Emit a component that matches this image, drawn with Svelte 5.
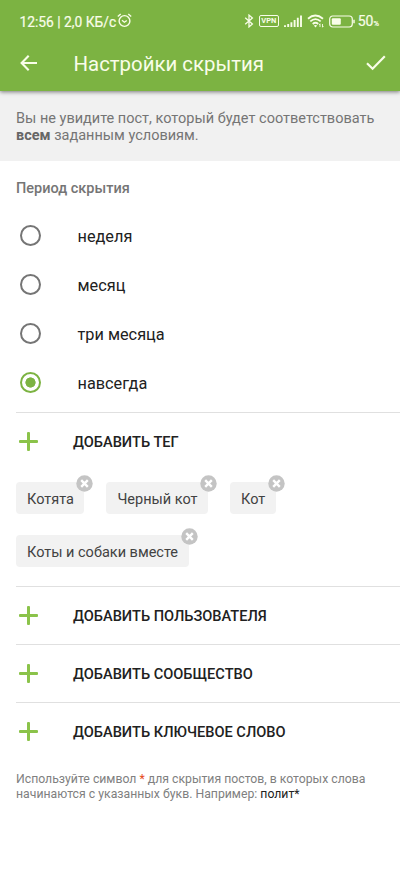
<script lang="ts">
	const periods = [
		{ value: 'week', label: 'неделя' },
		{ value: 'month', label: 'месяц' },
		{ value: 'three_months', label: 'три месяца' },
		{ value: 'forever', label: 'навсегда' }
	];

	const sections = ['Добавить пользователя', 'Добавить сообщество', 'Добавить ключевое слово'];

	let period = 'forever';
	let tags = ['Котята', 'Черный кот', 'Кот', 'Коты и собаки вместе'];

	function removeTag(tag: string) {
		tags = tags.filter((t) => t !== tag);
	}
</script>

<svelte:head>
	<title>Настройки скрытия</title>
</svelte:head>

<div class="screen">
	<header>
		<div class="status">
			<span class="time">12:56 | 2,0 КБ/с</span>
			<svg class="alarm" width="15" height="15" viewBox="0 0 15 15">
				<circle cx="7.5" cy="8" r="5.4" />
				<path d="M.8 3.5 3.7 1M14.2 3.5 11.3 1M5 7.3l2.4 1.9 2.4-1.7" />
			</svg>
			<div class="indicators">
				<svg width="10" height="14" viewBox="0 0 10 14">
					<path d="M1.2 3.8 8.4 10 5 12.9V1.1L8.4 4 1.2 10.2" stroke-width="1.3" />
				</svg>
				<span class="vpn">VPN</span>
				<svg class="signal" width="18" height="12" viewBox="0 0 18 12">
					<path d="M1 10.2V12M4.2 9v3M7.4 7.2V12M10.6 5v7M13.8 2.8V12M17 .5V12" stroke-width="1.9" />
				</svg>
				<svg class="wifi" width="18" height="14" viewBox="0 0 18 14">
					<path d="M1 4.7Q8.2-1.6 16 4.7M3.3 7.4Q8.4 2.9 13.7 7.4M5.7 10Q8.5 7.6 11.2 10" stroke-width="1.8" />
					<path d="m6.8 11.5 1.7 1.9 1.7-1.9Q8.5 10.4 6.8 11.5z" class="solid" />
					<path d="M13 13v-3.2M15.5 10v3.2M12 11l1-1.2M16.4 12l-.9 1.2" stroke-width=".9" />
				</svg>
				<svg class="battery" width="26" height="13" viewBox="0 0 26 13">
					<rect x=".7" y="1" width="22.6" height="11" rx="3" stroke-width="1.2" />
					<rect x="2.8" y="3.2" width="9" height="6.6" rx="1" class="solid" />
					<path d="M25 4.8v3.5" stroke-width="1.5" />
				</svg>
				<span class="percent">50<small>%</small></span>
			</div>
		</div>
		<div class="toolbar">
			<button type="button" aria-label="Назад">
				<svg width="18" height="16" viewBox="0 0 18 16">
					<path d="M8.7.8 1.6 8l7.1 7.2M1.8 8H17" stroke-width="2.1" />
				</svg>
			</button>
			<h1>Настройки скрытия</h1>
			<button type="button" aria-label="Готово">
				<svg width="20" height="16" viewBox="0 0 20 16">
					<path d="m1 8.3 5.6 5.5L18.8 1.3" stroke-width="2.2" />
				</svg>
			</button>
		</div>
	</header>

	<p class="notice">
		Вы не увидите пост, который будет соответствовать<br /><b>всем</b> заданным условиям.
	</p>

	<main>
		<h2>Период скрытия</h2>
		{#each periods as item (item.value)}
			<label class="period">
				<input type="radio" bind:group={period} value={item.value} />
				<span>{item.label}</span>
			</label>
		{/each}

		<section class="tags-section">
			<button type="button" class="add">
				<span class="plus"></span>
				<span>Добавить тег</span>
			</button>
			<div class="tags">
				{#each tags as tag (tag)}
					<div class="tag">
						{tag}
						<button type="button" aria-label="Удалить" on:click={() => removeTag(tag)}>
							<svg width="17" height="17" viewBox="0 0 17 17">
								<circle cx="8.5" cy="8.5" r="8.2" />
								<path d="m5.2 5.2 6.6 6.6M11.8 5.2l-6.6 6.6" />
							</svg>
						</button>
					</div>
				{/each}
			</div>
		</section>

		{#each sections as section (section)}
			<section>
				<button type="button" class="add">
					<span class="plus"></span>
					<span>{section}</span>
				</button>
			</section>
		{/each}

		<p class="hint">
			Используйте символ <i>*</i> для скрытия постов, в которых слова<br />начинаются с указанных букв.
			Например: <b>полит*</b>
		</p>
	</main>
</div>

<style>
	:global(body) {
		background: #fff;
	}
	* {
		box-sizing: border-box;
		margin: 0;
		padding: 0;
	}
	.screen {
		min-height: 889px;
		overflow: hidden;
		font-family: Roboto, sans-serif;
		color: #212121;
	}
	button {
		display: flex;
		border: 0;
		background: none;
		font: inherit;
		color: inherit;
	}

	header {
		position: relative;
		height: 91px;
		background: #7cb342;
		color: #f9fde9;
		box-shadow: 0 1px 4px rgba(0, 0, 0, 0.5);
	}
	header svg {
		flex: none;
		fill: none;
		stroke: currentColor;
	}
	header .solid {
		fill: currentColor;
		stroke: none;
	}
	.status {
		display: flex;
		align-items: center;
		height: 36px;
		padding: 6px 21px 0 19.5px;
		font-size: 14px;
		line-height: 18px;
	}
	.time,
	.percent {
		padding-top: 2px;
		-webkit-text-stroke: 0.2px currentColor;
	}
	.time {
		font-size: 13.8px;
	}
	.alarm {
		margin: -2px 0 0 1px;
		stroke-width: 1.4;
	}
	.indicators {
		display: flex;
		align-items: center;
		margin-left: auto;
	}
	.vpn {
		width: 20px;
		height: 12px;
		margin: 0 5px;
		border: 1.3px solid currentColor;
		border-radius: 2px;
		font-size: 7.5px;
		font-weight: 700;
		line-height: 10px;
		text-align: center;
	}
	.wifi {
		margin: 0 4px 0 5px;
	}
	.percent {
		margin-left: 3px;
	}
	.percent small {
		font-size: 7.5px;
	}
	.toolbar {
		display: flex;
		align-items: center;
		height: 55px;
		padding: 0 14px 2px 20px;
	}
	h1 {
		flex: 1;
		margin-left: 35.5px;
		padding-top: 2px;
		font-size: 20.4px;
		font-weight: 400;
		line-height: 24px;
	}

	.notice {
		height: 70px;
		padding: 19px 16px 0;
		background: #f1f1f1;
		color: #757575;
		font-size: 14.5px;
		line-height: 17px;
		white-space: nowrap;
	}
	.notice b {
		color: #666;
	}

	main {
		padding-left: 16px;
	}
	h2 {
		height: 50px;
		padding-top: 18px;
		color: #757575;
		font-size: 14.5px;
		font-weight: 500;
		line-height: 19px;
	}
	.period {
		display: flex;
		align-items: center;
		height: 49px;
		gap: 36.5px;
		font-size: 16.3px;
		line-height: 20px;
	}
	.period span {
		padding-top: 3px;
	}
	.period input {
		appearance: none;
		width: 21px;
		height: 21px;
		margin: 0 0 0 4px;
		border: 2px solid #757575;
		border-radius: 50%;
	}
	.period input:checked {
		border-color: #7cb342;
		background: radial-gradient(circle, #7cb342 4.8px, transparent 5.4px);
	}

	section {
		height: 58px;
		border-top: 1px solid #e0e0e0;
	}
	.tags-section {
		height: 174px;
		margin-top: 5px;
	}
	.add {
		align-items: center;
		width: 100%;
		height: 57px;
		gap: 35px;
		padding-left: 3px;
		font-size: 14.6px;
		font-weight: 500;
		line-height: 20px;
		text-transform: uppercase;
		white-space: nowrap;
	}
	.plus {
		display: grid;
		width: 19px;
		height: 19px;
	}
	.plus::before,
	.plus::after {
		grid-area: 1 / 1;
		place-self: center;
		width: 19px;
		height: 3px;
		border-radius: 1px;
		background: #8bc34a;
		content: '';
	}
	.plus::after {
		width: 3px;
		height: 19px;
	}
	.tags {
		display: flex;
		flex-wrap: wrap;
		gap: 21px 22px;
		padding: 12px 40px 0 0;
	}
	.tag {
		position: relative;
		height: 32px;
		padding: 0 10.5px 0 11px;
		border-radius: 4px;
		background: #f2f2f2;
		color: #424242;
		font-size: 14.5px;
		line-height: 35px;
	}
	.tag button {
		position: absolute;
		top: -7px;
		right: -9px;
	}
	.tag circle {
		fill: #c4c4c4;
	}
	.tag path {
		stroke: #fff;
		stroke-width: 2.4;
	}

	.hint {
		padding-top: 12px;
		color: #808080;
		font-size: 12.25px;
		line-height: 14.5px;
		white-space: nowrap;
	}
	.hint i {
		color: #e64a19;
		font-style: normal;
	}
	.hint b {
		color: #212121;
		font-weight: 400;
	}
</style>
